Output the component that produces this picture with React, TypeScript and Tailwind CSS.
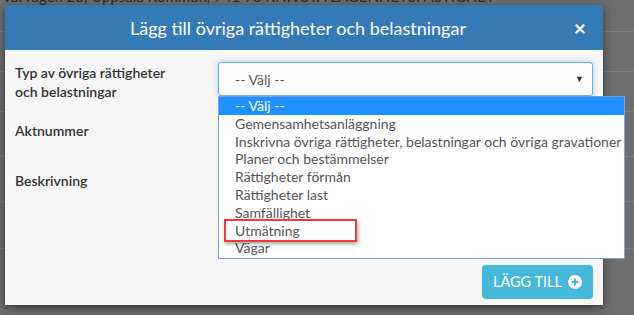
import React from "react";

const options = [
  "-- Välj --",
  "Gemensamhetsanläggning",
  "Inskrivna övriga rättigheter, belastningar och övriga gravationer",
  "Planer och bestämmelser",
  "Rättigheter förmån",
  "Rättigheter last",
  "Samfällighet",
  "Utmätning",
  "Vägar",
];

export default function App() {
  return (
    <div
      className="relative w-[634px] h-[315px] overflow-hidden bg-[#6e6e6e]"
      style={{ fontFamily: "Lato, 'Open Sans', sans-serif" }}
    >
      {/* dimmed page behind */}
      <div className="flex flex-col text-[#2a2a2a]">
        <div className="h-[6px] -mt-[12px] pl-[2px] text-[15px] leading-[16px] whitespace-nowrap">
          Varvagen 2b, Uppsala Kommun, 741 93 KNIVSTA LAGENHETSFASTIGHET
        </div>
        <div className="h-[38px] border-b border-[#7c7c7c]" />
        <div className="h-[40px] border-b border-[#7c7c7c]" />
        <div className="h-[40px] border-b border-[#7c7c7c]" />
        <div className="h-[45px] border-b border-[#7c7c7c]" />
        <div className="h-[45px] border-b border-[#7c7c7c]" />
        <div className="h-[47px] border-b border-[#7c7c7c]" />
      </div>

      {/* modal */}
      <div className="absolute left-[5px] top-[5px] w-[598px] h-[300px] flex flex-col shadow-[0_3px_9px_rgba(0,0,0,0.5)]">
        <div className="relative h-[45px] bg-[#337ab7] flex items-center justify-center">
          <span className="text-white text-[18px] leading-[22px] -ml-[12px]">
            Lägg till övriga rättigheter och belastningar
          </span>
          <span className="absolute right-[17px] top-[12px] text-white text-[21px] font-bold leading-[22px]">
            ×
          </span>
        </div>
        <div className="flex-1 bg-[#f7f7f7] pl-[10px] pr-[10px] pt-[12px] flex flex-col">
          <div className="flex">
            <div className="w-[203px] pt-[1px] text-[14px] leading-[19px] font-semibold text-[#333]">
              Typ av övriga rättigheter
              <br />
              och belastningar
            </div>
            <div className="w-[375px] h-[34px] bg-white border border-[#66afe9] rounded-[3px] shadow-[0_0_6px_rgba(102,175,233,0.5)] flex items-center justify-between pl-[16px] pr-[8px] text-[14px] text-[#555]">
              <span>-- Välj --</span>
              <span className="text-[9px] text-[#333]">▼</span>
            </div>
          </div>
          <div className="mt-[12px] h-[34px] flex items-center text-[14px] font-semibold text-[#333]">
            Aktnummer
          </div>
          <div className="mt-[16px] h-[34px] flex items-center text-[14px] font-semibold text-[#333]">
            Beskrivning
          </div>
          <div className="flex-1" />
          <div className="flex justify-end mb-[6px]">
            <div className="w-[111px] h-[34px] rounded-[4px] bg-[#46b8da] flex items-center justify-center gap-[6px] text-white text-[14.5px]">
              <span>LÄGG TILL</span>
              <svg width="14" height="14" viewBox="0 0 14 14">
                <circle cx="7" cy="7" r="7" fill="white" />
                <rect x="3.5" y="6" width="7" height="2" fill="#46b8da" />
                <rect x="6" y="3.5" width="2" height="7" fill="#46b8da" />
              </svg>
            </div>
          </div>
        </div>
      </div>

      {/* open dropdown list */}
      <div className="absolute left-[218px] top-[96px] w-[407px] h-[163px] bg-white border border-[#7f9fd8] flex flex-col text-[14px] text-[#555]">
        {options.map((o, i) => (
          <div
            key={o}
            className={
              i === 0
                ? "h-[17.8px] leading-[17.8px] pl-[16px] bg-[#1e90ff] text-white whitespace-nowrap"
                : "h-[17.8px] leading-[17.8px] pl-[16px] whitespace-nowrap"
            }
          >
            {o}
          </div>
        ))}
      </div>

      {/* red annotation */}
      <div className="absolute left-[224px] top-[219px] w-[133px] h-[23px] border-2 border-[#ee3b3b] shadow-[1px_2px_4px_rgba(0,0,0,0.35)]" />
    </div>
  );
}
